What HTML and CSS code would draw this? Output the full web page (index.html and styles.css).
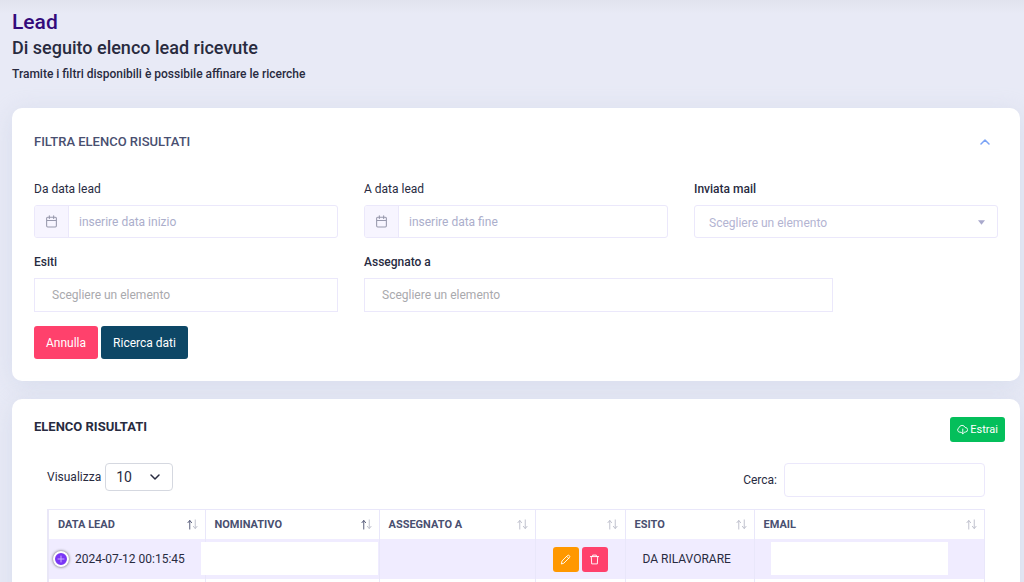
FILE: index.html
```html
<!DOCTYPE html>
<html lang="it">
<head>
<meta charset="utf-8">
<meta name="viewport" content="width=device-width, initial-scale=1">
<title>Lead</title>
<link rel="stylesheet" href="styles.css">
</head>
<body>
<svg class="sprite" aria-hidden="true">
  <symbol id="calendar" viewBox="0 0 24 24"><path d="M5 4h14a2 2 0 0 1 2 2v14a2 2 0 0 1-2 2H5a2 2 0 0 1-2-2V6a2 2 0 0 1 2-2zM3 10h18M8 1.500v5M16 1.500v5"/></symbol>
  <symbol id="sort" viewBox="0 0 12 12"><path class="up" d="M3 11V2M1 4l2-2.500L5 4"/><path class="down" d="M9 1v9M7 8l2 2.500L11 8"/></symbol>
</svg>
<main class="page">
  <header class="heading">
    <h1 class="heading-title">Lead</h1>
    <h2 class="heading-subtitle">Di seguito elenco lead ricevute</h2>
    <p class="heading-text">Tramite i filtri disponibili è possibile affinare le ricerche</p>
  </header>

  <section class="card filters">
    <div class="filters-head">
      <h3 class="filters-title">FILTRA ELENCO RISULTATI</h3>
      <button class="collapse" type="button" aria-label="Comprimi">
        <svg viewBox="0 0 10 10"><path d="M1 7l4-4 4 4"/></svg>
      </button>
    </div>
    <form class="filters-form">
      <div class="field">
        <label class="label" for="from">Da data lead</label>
        <div class="date">
          <span class="date-icon"><svg><use href="#calendar"/></svg></span>
          <input class="date-input" id="from" type="text" placeholder="inserire data inizio">
        </div>
      </div>
      <div class="field">
        <label class="label" for="to">A data lead</label>
        <div class="date">
          <span class="date-icon"><svg><use href="#calendar"/></svg></span>
          <input class="date-input" id="to" type="text" placeholder="inserire data fine">
        </div>
      </div>
      <div class="field">
        <label class="label label-strong" for="mail">Inviata mail</label>
        <div class="dropdown">
          <select class="dropdown-select" id="mail"><option>Scegliere un elemento</option></select>
          <svg class="dropdown-arrow" viewBox="0 0 8 5"><path d="M0 0h8L4 5z"/></svg>
        </div>
      </div>
      <div class="field">
        <label class="label label-strong" for="outcome">Esiti</label>
        <input class="multi" id="outcome" type="text" placeholder="Scegliere un elemento">
      </div>
      <div class="field field-wide">
        <label class="label label-strong" for="assigned">Assegnato a</label>
        <input class="multi" id="assigned" type="text" placeholder="Scegliere un elemento">
      </div>
      <div class="actions">
        <button class="button button-cancel" type="reset">Annulla</button>
        <button class="button button-search" type="button">Ricerca dati</button>
      </div>
    </form>
  </section>

  <section class="card results">
    <div class="results-head">
      <h3 class="results-title">ELENCO RISULTATI</h3>
      <button class="export" type="button">
        <svg viewBox="0 0 12 12"><path d="M4 9H3.200A2.600 2.600 0 0 1 2.300 4 3.400 3.400 0 0 1 8.800 3.800 2.500 2.500 0 0 1 9.200 8.800H8.500M6.300 5.500v5.200M4.700 9.200l1.600 1.600 1.600-1.600"/></svg>
        Estrai
      </button>
    </div>
    <div class="results-body">
      <div class="tools">
        <div class="length">
          <label for="length">Visualizza</label>
          <div class="length-box">
            <select class="length-select" id="length"><option>10</option></select>
            <svg class="length-arrow" viewBox="0 0 12 12"><path d="M2 4l4 4 4-4"/></svg>
          </div>
        </div>
        <div class="search">
          <label for="search">Cerca:</label>
          <input class="search-input" id="search" type="search">
        </div>
      </div>
      <table class="table">
        <colgroup><col class="col-date"><col class="col-name"><col class="col-assigned"><col class="col-actions"><col class="col-outcome"><col class="col-email"></colgroup>
        <thead>
          <tr>
            <th><div class="th">DATA LEAD<svg class="sort sort-asc"><use href="#sort"/></svg></div></th>
            <th><div class="th">NOMINATIVO<svg class="sort sort-asc"><use href="#sort"/></svg></div></th>
            <th><div class="th">ASSEGNATO A<svg class="sort"><use href="#sort"/></svg></div></th>
            <th><div class="th"><svg class="sort"><use href="#sort"/></svg></div></th>
            <th><div class="th">ESITO<svg class="sort"><use href="#sort"/></svg></div></th>
            <th><div class="th">EMAIL<svg class="sort"><use href="#sort"/></svg></div></th>
          </tr>
        </thead>
        <tbody>
          <tr class="row">
            <td>
              <div class="date-cell">
                <button class="expand" type="button" aria-label="Dettagli"><svg viewBox="0 0 8 8"><path d="M4 1v6M1 4h6"/></svg></button>
                2024-07-12 00:15:45
              </div>
            </td>
            <td class="masked"><span class="mask mask-name"></span></td>
            <td></td>
            <td>
              <div class="row-actions">
                <button class="icon-button icon-edit" type="button" aria-label="Modifica"><svg viewBox="0 0 12 12"><path d="M1.500 10.500l.7-2.900L8 1.800a1.500 1.500 0 0 1 2.200 2.200L4.400 9.800zM7.300 2.600l2.100 2.100"/></svg></button>
                <button class="icon-button icon-delete" type="button" aria-label="Elimina"><svg viewBox="0 0 12 12"><path d="M1.500 2.800h9M4 2.800V1.200h4v1.600M2.500 2.800l.4 8h6.200l.4-8"/></svg></button>
              </div>
            </td>
            <td class="outcome">DA RILAVORARE</td>
            <td class="masked"><span class="mask mask-email"></span></td>
          </tr>
          <tr><td></td><td></td><td></td><td></td><td></td><td></td></tr>
        </tbody>
      </table>
    </div>
  </section>
</main>
</body>
</html>
```
FILE: styles.css
```css
* { box-sizing: border-box; }
html { scrollbar-width: none; }
body {
  margin: 0;
  background: linear-gradient(#e1e3ee, #e8eaf6 14px) #e8eaf6;
  color: #282b3f;
  font: 12px/20px Roboto, sans-serif;
}
h1, h2, h3, p { margin: 0; }
input, select, button { margin: 0; font: inherit; color: inherit; }
input, select { min-width: 0; outline: 0; }
button { padding: 0; border: 0; background: none; cursor: pointer; }
svg { display: block; flex: none; fill: none; stroke: currentColor; stroke-linecap: round; stroke-linejoin: round; }
.sprite { position: absolute; width: 0; height: 0; }

.page { display: flex; flex-direction: column; gap: 18px; padding: 8px 4px 24px 12px; }
.heading { padding-bottom: 5px; }
.heading-title { font-size: 21px; line-height: 28px; font-weight: 500; color: #330b7b; }
.heading-subtitle { font-size: 18px; line-height: 24px; font-weight: 500; }
.heading-text { margin-top: 3px; font-size: 12px; line-height: 22px; font-weight: 500; }

.card { border-radius: 10px; background: #fff; box-shadow: 0 4px 24px #b8c4dc55; }
.filters { padding: 22px; }
.filters-head { display: flex; align-items: center; justify-content: space-between; padding: 2px 8px 2px 0; }
.filters-title { font-size: 13px; font-weight: 500; color: #494f70; }
.collapse { color: #7ba3f5; }
.collapse svg { width: 10px; height: 10px; stroke-width: 1.5; }
.filters-form { display: grid; grid-template-columns: repeat(12, minmax(0, 1fr)); gap: 14px 26px; padding-top: 25px; }
.field { grid-column: span 4; display: flex; flex-direction: column; gap: 6px; }
.field-wide { grid-column: span 6; }
.label-strong { font-weight: 500; }
.date { display: flex; height: 33px; border: 1px solid #ebe8fb; border-radius: 3px; overflow: hidden; }
.date-icon { display: flex; align-items: center; justify-content: center; width: 34px; border-right: 1px solid #ebe8fb; background: #f7f5ff; color: #9899ad; }
.date-icon svg { width: 13px; height: 13px; stroke-width: 2; }
.date-input { flex: 1; padding: 0 10px; border: 0; background: none; }
.date-input::placeholder { color: #abaecb; opacity: 1; }
.dropdown { position: relative; height: 33px; }
.dropdown-select { appearance: none; width: 100%; height: 100%; padding: 2px 14px 0; border: 1px solid #ebe8fb; border-radius: 3px; background: #fff; color: #b3b4d2; }
.dropdown-arrow { position: absolute; top: 15px; right: 13px; width: 7px; height: 5px; fill: #a9a9cc; stroke: none; pointer-events: none; }
.multi { height: 34px; padding: 0 17px; border: 1px solid #ebe8fb; border-radius: 0; background: #fff; }
.multi::placeholder { color: #a9a9ad; opacity: 1; }
.actions { grid-column: 1 / -1; display: flex; gap: 3px; }
.button { height: 33px; padding: 0 12px; border-radius: 3px; color: #fff; }
.button-cancel { background: #ff416c; }
.button-search { background: #0d4766; }

.results { padding: 18px 15px 24px 22px; }
.results-head { display: flex; align-items: flex-start; justify-content: space-between; }
.results-title { font-size: 13px; line-height: 20px; font-weight: 700; }
.export { display: flex; align-items: center; gap: 2px; height: 25px; padding: 0 7px; border-radius: 3px; background: #04bf5b; color: #fff; font-size: 11px; }
.export svg { width: 11px; height: 11px; }
.results-body { padding: 21px 20px 0 13px; }
.tools { display: flex; align-items: flex-start; justify-content: space-between; padding-bottom: 12px; }
.length, .search { display: flex; align-items: center; }
.length { gap: 4px; }
.search { gap: 7px; }
.length-box { position: relative; width: 68px; height: 28px; }
.length-select { appearance: none; width: 100%; height: 100%; padding: 0 10px; border: 1px solid #d5d8e0; border-radius: 4px; background: #fff; font-size: 14px; }
.length-arrow { position: absolute; top: 8px; right: 12px; width: 12px; height: 12px; stroke-width: 1.5; pointer-events: none; }
.search-input { width: 201px; height: 34px; padding: 0 10px; border: 1px solid #ebe8fb; border-radius: 4px; background: #fff; }

.table { width: 100%; table-layout: fixed; border-collapse: collapse; border-left: 2px solid #e9e7f7; }
.col-date { width: 157px; }
.col-name { width: 174px; }
.col-assigned { width: 156px; }
.col-actions { width: 90px; }
.col-outcome { width: 129px; }
.table th, .table td { padding: 0; border: 1px solid #e9e7fa; border-bottom: 0; }
.table td { height: 40px; border-top: 0; }
.th { display: flex; align-items: center; height: 29px; padding: 0 7px 0 9px; font-size: 11px; font-weight: 700; color: #494f70; }
.sort { width: 11px; height: 11px; margin-left: auto; color: #bbbcc9; }
.sort-asc { --up: #494f70; }
.up { stroke: var(--up, currentColor); }
.row { background: #f0ecff; }
.date-cell { display: flex; align-items: center; gap: 6px; padding-left: 4px; white-space: nowrap; }
.expand { display: flex; align-items: center; justify-content: center; width: 16px; height: 16px; border: 2px solid #fff; border-radius: 50%; background: #7a37f5; color: #c9adff; box-shadow: 0 0 3px #555; }
.expand svg { width: 8px; height: 8px; }
.row-actions { display: flex; justify-content: center; gap: 3px; }
.icon-button { display: flex; align-items: center; justify-content: center; width: 26px; height: 25px; border-radius: 3px; color: #fff; }
.icon-button svg { width: 11px; height: 11px; }
.icon-edit { background: #ff9800; }
.icon-delete { background: #ff416c; }
.table .outcome { padding-left: 17px; }
.masked { position: relative; }
.mask { position: absolute; top: 3px; width: 177px; height: 33px; background: #fff; }
.mask-name { left: -5px; }
.mask-email { left: 16px; }
```
